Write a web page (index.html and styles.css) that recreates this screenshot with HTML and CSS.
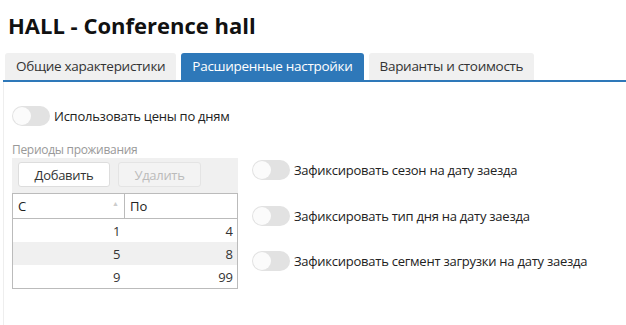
FILE: index.html
```html
<!DOCTYPE html>
<html lang="ru">

<head>
    <meta charset="UTF-8">
    <meta name="viewport" content="width=device-width, initial-scale=1.0">
    <title>HALL - Conference hall</title>

    <link rel="stylesheet" href="styles.css">
</head>

<body>

    <h1 class="title">HALL - Conference hall</h1>

    <div class="tabs">
        <div class="tab">Общие характеристики</div>
        <div class="tab active">Расширенные настройки</div>
        <div class="tab">Варианты и стоимость</div>
    </div>

    <div class="panel">
        <label class="switch-row top-switch">
            <span class="switch"><span class="knob"></span></span>
            <span>Использовать цены по дням</span>
        </label>

        <div class="columns">
            <div class="periods">
                <div class="periods-label">Периоды проживания</div>
                <div class="toolbar">
                    <button type="button" class="btn">Добавить</button>
                    <button type="button" class="btn" disabled>Удалить</button>
                </div>
                <table class="grid">
                    <thead>
                        <tr>
                            <th>С <span class="sort">&#9650;</span></th>
                            <th>По</th>
                        </tr>
                    </thead>
                    <tbody>
                        <tr><td>1</td><td>4</td></tr>
                        <tr class="alt"><td>5</td><td>8</td></tr>
                        <tr><td>9</td><td>99</td></tr>
                    </tbody>
                </table>
            </div>

            <div class="fixes">
                <label class="switch-row">
                    <span class="switch"><span class="knob"></span></span>
                    <span>Зафиксировать сезон на дату заезда</span>
                </label>
                <label class="switch-row">
                    <span class="switch"><span class="knob"></span></span>
                    <span>Зафиксировать тип дня на дату заезда</span>
                </label>
                <label class="switch-row">
                    <span class="switch"><span class="knob"></span></span>
                    <span>Зафиксировать сегмент загрузки на дату заезда</span>
                </label>
            </div>
        </div>
    </div>

</body>

</html>
```

FILE: styles.css
```css
body {
    font-family: "Open Sans", "Noto Sans", sans-serif;
    background-color: white;
    color: #222;
    margin: 0;
    overflow: hidden;
}

.title {
    font-size: 22px;
    font-weight: bold;
    color: #111;
    margin: 0;
    padding: 10px 0 0 8px;
    height: 42px;
    box-sizing: border-box;
    letter-spacing: 0;
}

.tabs {
    display: flex;
    gap: 5px;
    margin-left: 3px;
    padding-left: 2px;
    border-bottom: 2px solid #2e78b9;
    margin-top: 11px;
}

.tab {
    height: 27px;
    line-height: 27px;
    padding: 0 11px;
    font-size: 13.5px;
    color: #333;
    background-color: #f0f0f0;
    border-radius: 3px 3px 0 0;
    letter-spacing: -0.3px;
}

.tab.active {
    background-color: #2e78b9;
    color: white;
}

.panel {
    margin-left: 3px;
    border-left: 1px solid #eee;
    height: 243px;
    padding: 24px 0 0 8px;
    box-sizing: border-box;
}

.switch-row {
    display: flex;
    align-items: center;
    gap: 4px;
    font-size: 13px;
    color: #222;
    letter-spacing: -0.25px;
}

.switch {
    width: 38px;
    height: 20px;
    border-radius: 10px;
    background-color: #e2e2e2;
    position: relative;
    flex-shrink: 0;
}

.knob {
    position: absolute;
    left: 1px;
    top: 1px;
    width: 18px;
    height: 18px;
    border-radius: 50%;
    background: #fbfbfb;
}

.columns {
    display: flex;
    margin-top: 15px;
}

.periods {
    width: 226px;
}

.periods-label {
    font-size: 12px;
    color: #999;
    height: 17px;
    letter-spacing: -0.3px;
}

.toolbar {
    display: flex;
    gap: 8px;
    background-color: #f0f0f0;
    padding: 4px 6px 0;
    height: 35px;
    box-sizing: border-box;
}

.btn {
    height: 25px;
    border: 1px solid #ddd;
    border-radius: 3px;
    background: white;
    font-family: inherit;
    font-size: 13px;
    color: #333;
    padding: 0;
    width: 92px;
    letter-spacing: -0.3px;
}

.btn:disabled {
    width: 83px;
    background: #f3f3f3;
    color: #bbb;
    border-color: #e4e4e4;
}

.grid {
    border-collapse: collapse;
    width: 226px;
    font-size: 13px;
    border: 1px solid #bbb;
}

.grid th {
    text-align: left;
    font-weight: normal;
    height: 24px;
    padding: 0 5px;
    border-bottom: 1px solid #bbb;
    color: #222;
}

.grid th:first-child {
    border-right: 1px solid #bbb;
    width: 101px;
}

.sort {
    float: right;
    font-size: 7px;
    color: #ccc;
    margin-top: 2px;
}

.grid td {
    text-align: right;
    height: 23px;
    padding: 0 4px;
    color: #333;
}

.grid tr.alt td {
    background-color: #f0f0f0;
}

.fixes {
    display: flex;
    flex-direction: column;
    gap: 25.5px;
    margin-left: 14px;
    margin-top: 19px;
}
```
